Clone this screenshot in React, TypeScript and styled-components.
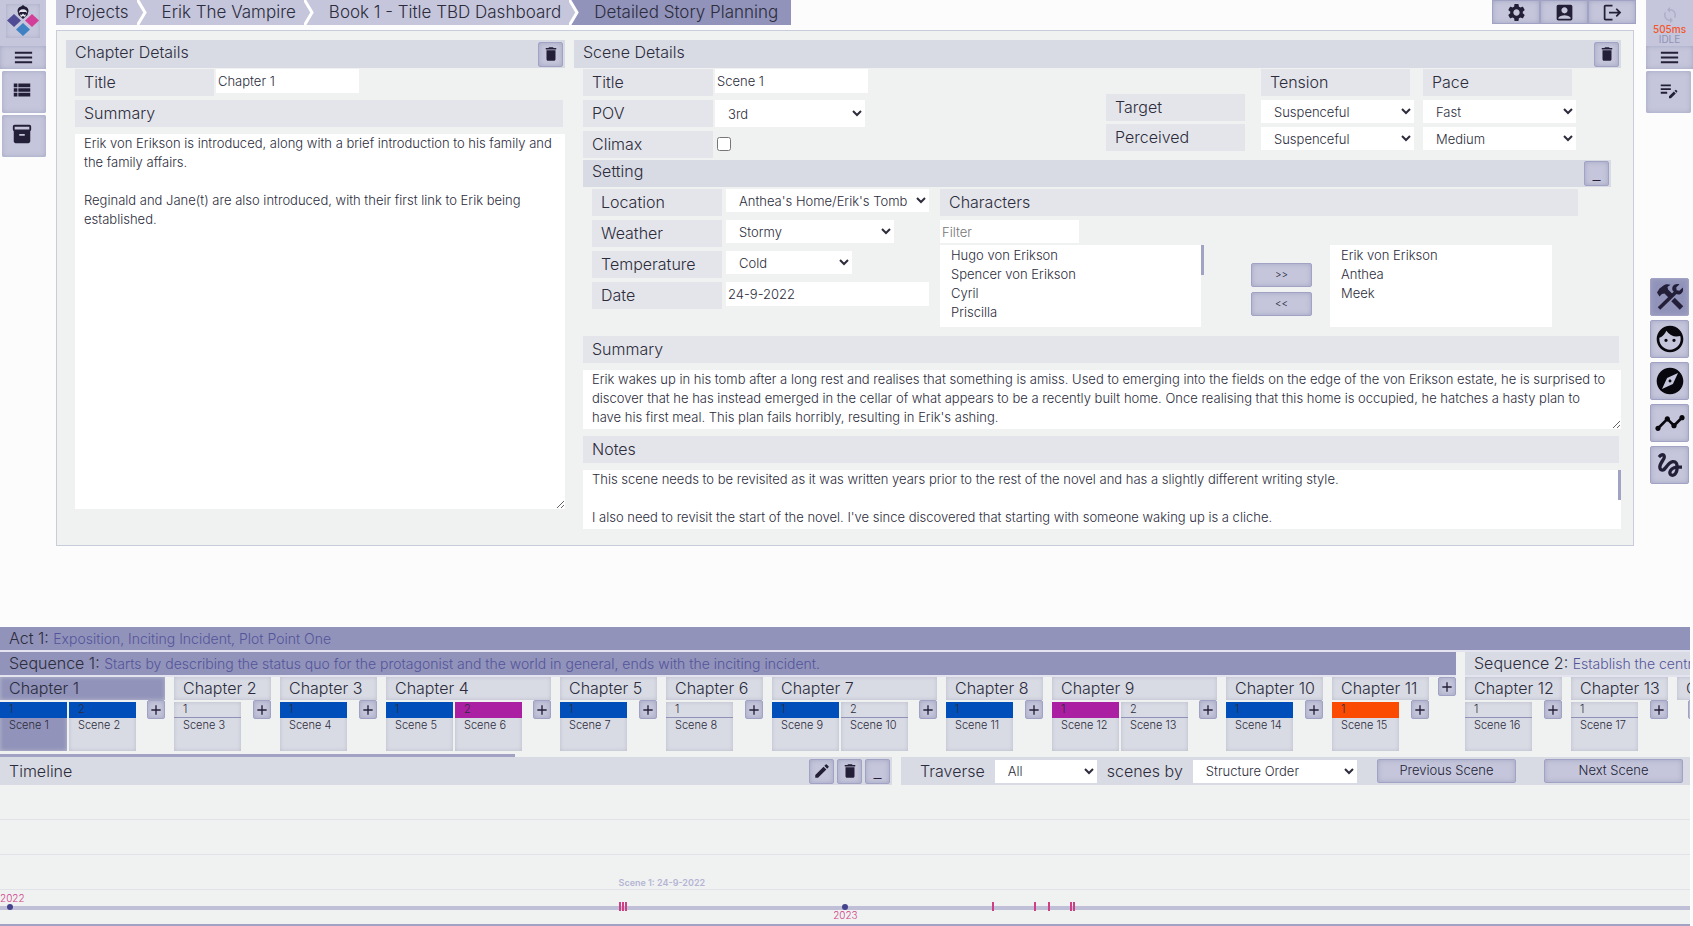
import React from 'react';
import styled, { createGlobalStyle, css } from 'styled-components';
import {
  MdAccountBox,
  MdAdd,
  MdDelete,
  MdEdit,
  MdEditNote,
  MdExplore,
  MdFace,
  MdGesture,
  MdInventory2,
  MdLogout,
  MdMenu,
  MdSettings,
  MdSync,
  MdTimeline,
  MdViewList,
} from 'react-icons/md';

const color = {
  page: '#fcfcfd',
  panel: '#f0f2f2',
  header: '#d9dbe4',
  label: '#e4e5ea',
  control: '#c5c6db',
  active: '#9193ba',
  edge: '#a2a3c4',
  ink: '#231f38',
  text: '#2c2c3c',
  hint: '#54549a',
  pink: '#cf3f86',
  line: '#e2e3e8',
};

const GlobalStyle = createGlobalStyle`
  *, *::before, *::after { box-sizing: border-box; }
  body {
    margin: 0;
    background: ${color.page};
    color: ${color.text};
    font-family: Inter, "Liberation Sans", sans-serif;
    font-size: 16px;
    font-weight: 300;
  }
  button, input, select, textarea {
    margin: 0;
    border: 0;
    border-radius: 0;
    color: inherit;
    font: inherit;
  }
  h2, h3, p, ul, ol { margin: 0; padding: 0; font: inherit; list-style: none; }
`;

const Page = styled.div`
  display: flex;
  flex-direction: column;
  min-height: 100vh;
`;

const Workspace = styled.div`
  display: grid;
  grid-template-columns: 46px minmax(0, 1fr) 47px;
  flex: 1;
`;

/* ---------- side rails ---------- */

const Rail = styled.aside`
  display: flex;
  flex-direction: column;
`;

const RailHead = styled.div`
  display: flex;
  flex-direction: column;
  align-items: center;
  height: 46px;
  background: ${color.control};
`;

const LogoTile = styled.a`
  display: block;
  width: 34px;
  height: 34px;
  margin-top: 4px;
  box-shadow: inset 0 0 4px #a9abc6;
`;

const bevel = css`
  background: ${color.control};
  color: ${color.ink};
  box-shadow: inset 0 0 5px #a3a5c2;
`;

const MenuButton = styled.button`
  ${bevel}
  display: flex;
  align-items: center;
  justify-content: center;
  height: 23px;
  padding: 0;
  font-size: 23px;
`;

const RailButton = styled.button<{ $side: 'left' | 'right' }>`
  ${bevel}
  display: flex;
  align-items: center;
  justify-content: center;
  height: 42px;
  margin-top: 2px;
  margin-left: ${(p) => (p.$side === 'left' ? 2 : 0)}px;
  margin-right: ${(p) => (p.$side === 'left' ? 0 : 2)}px;
  padding: 0 ${(p) => (p.$side === 'left' ? 4 : 0)}px 4px 0;
  border-radius: 2px;
  font-size: 22px;
`;

const SyncState = styled.div`
  display: flex;
  flex-direction: column;
  align-items: center;
  padding-top: 6px;
  color: #aeb0ca;
  font-size: 18px;
`;

const SyncTime = styled.span<{ $late?: boolean }>`
  color: ${(p) => (p.$late ? '#f4552b' : '#9092b6')};
  font-size: 10px;
  font-weight: ${(p) => (p.$late ? 500 : 400)};
  line-height: 10px;
`;

const ToolStack = styled.nav`
  display: flex;
  flex-direction: column;
  gap: 4px;
  margin: 165px 4px 0;
`;

const ToolButton = styled.button<{ $active?: boolean }>`
  ${bevel}
  display: flex;
  align-items: center;
  justify-content: center;
  height: 38px;
  padding: 0;
  border: 1px solid ${color.edge};
  border-radius: 2px;
  background: ${(p) => (p.$active ? color.active : color.control)};
  color: #08070d;
  font-size: 32px;
`;

/* ---------- top bar ---------- */

const Main = styled.main`
  padding: 0 10px;
`;

const TopBar = styled.header`
  display: flex;
  justify-content: space-between;
  height: 25px;
`;

const Crumbs = styled.ol`
  display: flex;
`;

const Crumb = styled.li<{ $current?: boolean }>`
  display: flex;
  padding-right: ${(p) => (p.$current ? 5 : 0)}px;
  background: ${(p) => (p.$current ? color.active : color.control)};
`;

const CrumbLink = styled.a<{ $first?: boolean }>`
  padding: 0 8px 0 ${(p) => (p.$first ? 9 : 15)}px;
  color: inherit;
  font-size: 17px;
  line-height: 25px;
  text-decoration: none;
  white-space: nowrap;
`;

const TopButtons = styled.div`
  display: flex;
`;

const TopButton = styled.button`
  ${bevel}
  display: flex;
  align-items: center;
  justify-content: center;
  width: 48px;
  height: 24px;
  padding: 0;
  border: 1px solid ${color.edge};
  font-size: 21px;
`;

/* ---------- form panel ---------- */

const Panel = styled.div`
  display: grid;
  grid-template-columns: minmax(0, 499fr) minmax(0, 1047fr);
  gap: 9px;
  margin: 5px 2px 0 0;
  padding: 9px 12px 16px 9px;
  border: 1px solid #c9ccda;
  background: ${color.panel};
`;

const Card = styled.section`
  display: flex;
  flex-direction: column;
`;

const CardHead = styled.div<{ $inner?: boolean }>`
  display: flex;
  align-items: center;
  justify-content: space-between;
  height: ${(p) => (p.$inner ? 27 : 28)}px;
  margin: ${(p) => (p.$inner ? '2px 10px 2px 0' : '0 0 1px')};
  padding: 0 2px 0 9px;
  background: ${color.header};
`;

const CardTitle = styled.h2`
  line-height: 22px;
  padding-bottom: 5px;
`;

const CardBody = styled.div`
  display: flex;
  flex: 1;
  flex-direction: column;
  padding-left: 9px;
`;

const IconButton = styled.button`
  ${bevel}
  display: flex;
  align-items: center;
  justify-content: center;
  width: 25px;
  height: 25px;
  padding: 0;
  border: 1px solid ${color.edge};
  border-radius: 2px;
  font-size: 18px;
`;

const Fields = styled.div`
  display: flex;
  flex-direction: column;
  gap: 4px;
`;

const Field = styled.div`
  display: flex;
  gap: 2px;
  height: 27px;
`;

const Label = styled.label<{ $width?: number }>`
  display: block;
  width: ${(p) => (p.$width ? p.$width + 'px' : 'auto')};
  height: 27px;
  padding-left: 9px;
  background: ${color.label};
  line-height: 27px;
`;

const BlockLabel = styled(Label)`
  margin: 0 2px 7px 0;
`;

const TextInput = styled.input<{ $width: number }>`
  width: ${(p) => p.$width}px;
  height: 24px;
  padding: 0 2px;
  background: #fff;
  font-size: 13px;
`;

const Select = styled.select<{ $width: number; $height?: number }>`
  width: ${(p) => p.$width}px;
  height: ${(p) => p.$height ?? 23}px;
  padding: 0 0 0 9px;
  background: #fff;
  font-size: 13px;
`;

const Check = styled.input`
  width: 14px;
  height: 14px;
  margin: 6px 0 0 2px;
`;

const TextArea = styled.textarea<{ $height?: number; $scrolls?: boolean }>`
  display: block;
  width: 100%;
  height: ${(p) => (p.$height ? p.$height + 'px' : 'auto')};
  margin-bottom: ${(p) => (p.$height ? 0 : 20)}px;
  flex: ${(p) => (p.$height ? 'none' : '1')};
  padding: 0 9px;
  background: #fff;
  font-size: 13px;
  line-height: 19px;
  outline: none;
  resize: ${(p) => (p.$scrolls ? 'none' : 'both')};
  scrollbar-width: ${(p) => (p.$scrolls ? 'none' : 'auto')};
`;

const TextBlock = styled.div`
  margin-top: 7px;
`;

const SceneTop = styled.div`
  display: flex;
  justify-content: space-between;
`;

const Matrix = styled.div`
  display: flex;
  margin-right: 45px;
`;

const MatrixNames = styled.div`
  display: flex;
  flex-direction: column;
  gap: 3px;
  margin-right: 16px;
  padding-top: 25px;
`;

const MatrixColumn = styled(Fields)`
  margin-left: 9px;
  &:nth-child(2) { margin-left: 0; }
`;

const Setting = styled.div`
  display: flex;
  gap: 11px;
  padding: 0 43px 2px 9px;
`;

const SettingField = styled(Field)`
  gap: 4px;
  width: 337px;
`;

const Characters = styled.div`
  display: flex;
  flex: 1;
  flex-direction: column;
`;

const CharacterFilter = styled(TextInput)`
  height: 23px;
  margin: 4px 0 2px;
`;

const Transfer = styled.div`
  display: flex;
`;

const CharacterList = styled.select<{ $width: number }>`
  width: ${(p) => p.$width}px;
  height: 82px;
  padding: 2px 0;
  background: #fff;
  font-size: 13px;
  scrollbar-width: none;
  option {
    height: 19px;
    min-height: 19px;
    padding: 0 11px;
    font-weight: 300;
    line-height: 19px;
  }
`;

const ScrollArea = styled.div<{ $outside?: boolean }>`
  position: relative;
  padding-right: ${(p) => (p.$outside ? 3 : 0)}px;
`;

const ScrollThumb = styled.div`
  position: absolute;
  top: 0;
  right: 0;
  width: 3px;
  height: 30px;
  background: ${color.edge};
`;

const MoveButtons = styled.div`
  display: flex;
  flex-direction: column;
  gap: 5px;
  margin: 18px 18px 0 47px;
`;

const PlainButton = styled.button<{ $width: number }>`
  ${bevel}
  width: ${(p) => p.$width}px;
  height: 24px;
  padding: 0 0 2px;
  border: 1px solid ${color.edge};
  border-radius: 2px;
  font-size: ${(p) => (p.$width > 100 ? 13 : 10)}px;
`;

/* ---------- story structure ---------- */

const Dock = styled.footer`
  margin-right: 3px;
  background: ${color.panel};
`;

const Strip = styled.div`
  overflow: hidden;
  height: 127px;
  white-space: nowrap;
`;

const Banner = styled.h3<{ $active?: boolean }>`
  height: 25px;
  padding-left: 9px;
  border-bottom: 2px solid #e3e4f0;
  background: ${(p) => (p.$active ? color.active : color.header)};
  line-height: 23px;
`;

const Hint = styled.span`
  color: ${color.hint};
  font-size: 14px;
`;

const Sequences = styled.div`
  display: flex;
  gap: 9px;
`;

const Sequence = styled.section`
  flex: none;
`;

const SequenceTitle = styled(Banner)`
  overflow: hidden;
  width: 0;
  min-width: 100%;
`;

const Chapters = styled.div`
  display: flex;
  gap: 9px;
`;

const Chapter = styled.div`
  min-width: 97px;
`;

const ChapterName = styled.button<{ $active?: boolean }>`
  display: block;
  width: 100%;
  height: 23px;
  padding: 0 0 0 9px;
  background: ${(p) => (p.$active ? color.active : color.header)};
  box-shadow: inset 0 0 4px #babccb;
  line-height: 23px;
  text-align: left;
`;

const Scenes = styled.div<{ $empty: boolean }>`
  display: flex;
  justify-content: ${(p) => (p.$empty ? 'flex-start' : 'space-between')};
  gap: 11px;
`;

const SceneGroup = styled.div`
  display: flex;
  gap: 2px;
  padding-top: 2px;
`;

const SceneCard = styled.button<{ $active?: boolean }>`
  width: 67px;
  height: 49px;
  padding: 0;
  background: ${(p) => (p.$active ? color.active : color.header)};
  box-shadow: inset 0 0 4px #babccb;
  font-size: 11px;
  text-align: left;
`;

const SceneNumber = styled.span<{ $fill?: string }>`
  display: block;
  height: 16px;
  padding-left: 9px;
  border-bottom: 1px solid ${(p) => p.$fill ?? '#8f91b8'};
  background: ${(p) => p.$fill ?? 'transparent'};
  line-height: 14px;
`;

const SceneName = styled.span`
  display: block;
  height: 33px;
  padding-left: 9px;
  line-height: 14px;
`;

const AddButton = styled.button`
  ${bevel}
  display: flex;
  flex: none;
  align-items: center;
  justify-content: center;
  width: 18px;
  height: 19px;
  padding: 0;
  border: 1px solid ${color.edge};
  border-radius: 2px;
  font-size: 16px;
`;

const ScrollTrack = styled.div`
  display: grid;
  grid-template-columns: 515fr 1175fr;
  height: 3px;
`;

const ScrollHandle = styled.div`
  background: ${color.edge};
`;

/* ---------- timeline ---------- */

const TimelineHead = styled.div`
  display: grid;
  grid-template-columns: minmax(0, 892fr) minmax(0, 789fr);
  gap: 9px;
`;

const TimelineBar = styled.div`
  display: flex;
  align-items: center;
  justify-content: space-between;
  height: 28px;
  padding: 0 2px 0 9px;
  background: ${color.header};
`;

const ButtonGroup = styled.div`
  display: flex;
  gap: 3px;
`;

const TraverseBar = styled(TimelineBar)`
  padding: 0 7px 0 19px;
`;

const TraverseGroup = styled.div<{ $gap: number }>`
  display: flex;
  align-items: center;
  gap: ${(p) => p.$gap}px;
`;

const Lane = styled.div`
  height: 35px;
  border-bottom: 1px solid ${color.line};
`;

const Axis = styled.div`
  position: relative;
  height: 36px;
  padding-top: 16px;
  border-bottom: 2px solid ${color.edge};
`;

const AxisLine = styled.div`
  height: 4px;
  background: #bfc0d7;
`;

const Tick = styled.i`
  position: absolute;
  top: 12px;
  width: 2px;
  height: 9px;
  background: ${color.pink};
`;

const YearDot = styled.i`
  position: absolute;
  top: 14px;
  width: 6px;
  height: 6px;
  border-radius: 50%;
  background: #45438b;
`;

const YearName = styled.span<{ $below?: boolean }>`
  position: absolute;
  top: ${(p) => (p.$below ? 19 : 2)}px;
  color: ${color.pink};
  font-size: 10px;
  line-height: 12px;
`;

const EventName = styled.span`
  position: absolute;
  top: -14px;
  color: #b4b5d2;
  font-size: 9px;
  font-weight: 600;
  line-height: 14px;
`;

/* ---------- drawings ---------- */

const Logo = () => (
  <svg width="34" height="34" viewBox="0 0 34 34" aria-hidden="true">
    <path d="M8 10l7 6.500-7 6.500-7-6.500z" fill="#4f4b95" />
    <path d="M26 10l7 6.500-7 6.500-7-6.500z" fill="#d33f98" />
    <path d="M17 19l7 6.500-7 6.500-7-6.500z" fill="#3f81c3" />
    <path d="M11.500 7C11.500 4.500 13 3 15 2.500L17 1l2 1.500c2 .5 3.500 2 3.500 4.500l-1 4-4.500 4-4.500-4z" fill="#211c33" />
    <path d="M12.800 9c0-2.300 1.600-3.700 4.200-3.700s4.200 1.400 4.200 3.700l-1.400-1h-5.600z" fill="#e2e3ee" />
    <path d="M13.800 10.300l1.700.8L17 9.500l1.500 1.600 1.700-.8-1.200 2.700-2-1-2 1z" fill="#e2e3ee" />
  </svg>
);

const HammerWrench = () => (
  <svg width="30" height="30" viewBox="0 0 30 30" aria-hidden="true">
    <g fill="none" stroke={color.ink} strokeWidth="4">
      <path d="M4 26.500L21.500 9.500" strokeWidth="3.600" />
      <path d="M18 17.500l8.500 8.500" strokeWidth="5" />
    </g>
    <path
      d="M2 10.500l2.500-4L8.500 3.500c2-1.600 4.600-1.600 7-.8l-3 2.300.6 2.600 4.400 4.400-3.800 3.800-4.200-4.200-2.600.4-2.400 2.600z"
      fill={color.ink}
    />
    <path
      d="M24.500 2.200l-3.300 3.400.5 2.700 2.700.5 3.400-3.300c.9 3-.1 5.300-2.100 6.400-1.400.8-3 .8-4.600.2l-3.500-3.500c-.6-1.600-.5-3.200.4-4.500 1.300-2 3.600-2.700 6.500-1.900z"
      fill={color.ink}
    />
  </svg>
);

const CrumbArrow = ({ next }: { next: string }) => (
  <svg width="10" height="25" viewBox="0 0 10 25" aria-hidden="true">
    <path d="M0 0H10V25H0L8 12.500z" fill={next} />
    <path d="M0 -1L8 12.500L0 26" fill="none" stroke="#fff" strokeWidth="3" />
  </svg>
);

/* ---------- data ---------- */

const crumbs = ['Projects', 'Erik The Vampire', 'Book 1 - Title TBD Dashboard', 'Detailed Story Planning'];

const chapterSummary =
  'Erik von Erikson is introduced, along with a brief introduction to his family and the family affairs.\n\nReginald and Jane(t) are also introduced, with their first link to Erik being established.';
const sceneSummary =
  "Erik wakes up in his tomb after a long rest and realises that something is amiss. Used to emerging into the fields on the edge of the von Erikson estate, he is surprised to discover that he has instead emerged in the cellar of what appears to be a recently built home. Once realising that this home is occupied, he hatches a hasty plan to have his first meal. This plan fails horribly, resulting in Erik's ashing.";
const sceneNotes =
  "This scene needs to be revisited as it was written years prior to the rest of the novel and has a slightly different writing style.\n\nI also need to revisit the start of the novel. I've since discovered that starting with someone waking up is a cliche.\n\n\n";

const BLUE = '#004eb9';
const MAGENTA = '#ab20a2';
const ORANGE = '#fb4b02';

type ChapterData = { no: number; first: number; fills: (string | undefined)[] };

const firstSequence: ChapterData[] = [
  { no: 1, first: 1, fills: [BLUE, BLUE] },
  { no: 2, first: 3, fills: [undefined] },
  { no: 3, first: 4, fills: [BLUE] },
  { no: 4, first: 5, fills: [BLUE, MAGENTA] },
  { no: 5, first: 7, fills: [BLUE] },
  { no: 6, first: 8, fills: [undefined] },
  { no: 7, first: 9, fills: [BLUE, undefined] },
  { no: 8, first: 11, fills: [BLUE] },
  { no: 9, first: 12, fills: [MAGENTA, undefined] },
  { no: 10, first: 14, fills: [BLUE] },
  { no: 11, first: 15, fills: [ORANGE] },
];

const secondSequence: ChapterData[] = [
  { no: 12, first: 16, fills: [undefined] },
  { no: 13, first: 17, fills: [undefined] },
  { no: 14, first: 18, fills: [] },
];

const sceneTicks = [36.6, 36.8, 37, 58.7, 61.2, 62, 63.3, 63.5];
const years = [
  { name: '2022', dot: 0.4, text: 0, below: false },
  { name: '2023', dot: 49.8, text: 49.3, below: true },
];

const ChapterBlock = ({ data }: { data: ChapterData }) => (
  <Chapter>
    <ChapterName $active={data.no === 1}>Chapter {data.no}</ChapterName>
    <Scenes $empty={data.fills.length === 0}>
      <SceneGroup>
        {data.fills.map((fill, i) => (
          <SceneCard key={i} $active={data.first + i === 1}>
            <SceneNumber $fill={fill}>{i + 1}</SceneNumber>
            <SceneName>Scene {data.first + i}</SceneName>
          </SceneCard>
        ))}
      </SceneGroup>
      <AddButton aria-label={`Add scene to chapter ${data.no}`}>
        <MdAdd />
      </AddButton>
    </Scenes>
  </Chapter>
);

export default function App() {
  return (
    <Page>
      <GlobalStyle />
      <Workspace>
        <Rail>
          <RailHead>
            <LogoTile href="#" aria-label="Home"><Logo /></LogoTile>
          </RailHead>
          <MenuButton aria-label="Menu"><MdMenu /></MenuButton>
          <RailButton $side="left" aria-label="Outline"><MdViewList /></RailButton>
          <RailButton $side="left" aria-label="Archive"><MdInventory2 /></RailButton>
        </Rail>

        <Main>
          <TopBar>
            <nav aria-label="Breadcrumb">
              <Crumbs>
                {crumbs.map((name, i) => (
                  <Crumb key={name} $current={i === crumbs.length - 1}>
                    <CrumbLink href="#" $first={i === 0}>{name}</CrumbLink>
                    {i < crumbs.length - 1 && (
                      <CrumbArrow next={i === crumbs.length - 2 ? color.active : color.control} />
                    )}
                  </Crumb>
                ))}
              </Crumbs>
            </nav>
            <TopButtons>
              <TopButton aria-label="Settings"><MdSettings /></TopButton>
              <TopButton aria-label="Account"><MdAccountBox /></TopButton>
              <TopButton aria-label="Log out"><MdLogout /></TopButton>
            </TopButtons>
          </TopBar>

          <Panel>
            <Card>
              <CardHead>
                <CardTitle>Chapter Details</CardTitle>
                <IconButton aria-label="Delete chapter"><MdDelete /></IconButton>
              </CardHead>
              <CardBody>
                <Fields>
                  <Field>
                    <Label $width={139} htmlFor="chapter-title">Title</Label>
                    <TextInput $width={143} id="chapter-title" defaultValue="Chapter 1" />
                  </Field>
                  <BlockLabel htmlFor="chapter-summary">Summary</BlockLabel>
                </Fields>
                <TextArea id="chapter-summary" defaultValue={chapterSummary} />
              </CardBody>
            </Card>

            <Card>
              <CardHead>
                <CardTitle>Scene Details</CardTitle>
                <IconButton aria-label="Delete scene"><MdDelete /></IconButton>
              </CardHead>
              <CardBody>
                <SceneTop>
                  <Fields>
                    <Field>
                      <Label $width={130} htmlFor="scene-title">Title</Label>
                      <TextInput $width={153} id="scene-title" defaultValue="Scene 1" />
                    </Field>
                    <Field>
                      <Label $width={130} htmlFor="pov">POV</Label>
                      <Select $width={150} $height={27} id="pov"><option>3rd</option></Select>
                    </Field>
                    <Field>
                      <Label $width={130} htmlFor="climax">Climax</Label>
                      <Check type="checkbox" id="climax" />
                    </Field>
                  </Fields>
                  <Matrix>
                    <MatrixNames>
                      <Label as="span" $width={139}>Target</Label>
                      <Label as="span" $width={139}>Perceived</Label>
                    </MatrixNames>
                    <MatrixColumn>
                      <Label as="span" $width={149}>Tension</Label>
                      <Select $width={153} aria-label="Target tension"><option>Suspenceful</option></Select>
                      <Select $width={153} aria-label="Perceived tension"><option>Suspenceful</option></Select>
                    </MatrixColumn>
                    <MatrixColumn>
                      <Label as="span" $width={149}>Pace</Label>
                      <Select $width={153} aria-label="Target pace"><option>Fast</option></Select>
                      <Select $width={153} aria-label="Perceived pace"><option>Medium</option></Select>
                    </MatrixColumn>
                  </Matrix>
                </SceneTop>

                <CardHead $inner>
                  <CardTitle>Setting</CardTitle>
                  <IconButton aria-label="Collapse setting">_</IconButton>
                </CardHead>
                <Setting>
                  <Fields>
                    <SettingField>
                      <Label $width={130} htmlFor="location">Location</Label>
                      <Select $width={203} id="location"><option>Anthea's Home/Erik's Tomb</option></Select>
                    </SettingField>
                    <SettingField>
                      <Label $width={130} htmlFor="weather">Weather</Label>
                      <Select $width={168} id="weather"><option>Stormy</option></Select>
                    </SettingField>
                    <SettingField>
                      <Label $width={130} htmlFor="temperature">Temperature</Label>
                      <Select $width={126} id="temperature"><option>Cold</option></Select>
                    </SettingField>
                    <SettingField>
                      <Label $width={130} htmlFor="date">Date</Label>
                      <TextInput $width={203} id="date" defaultValue="24-9-2022" />
                    </SettingField>
                  </Fields>
                  <Characters>
                    <Label htmlFor="all-characters">Characters</Label>
                    <CharacterFilter $width={139} placeholder="Filter" aria-label="Filter characters" />
                    <Transfer>
                      <ScrollArea $outside>
                        <CharacterList $width={261} multiple id="all-characters">
                          <option>Hugo von Erikson</option>
                          <option>Spencer von Erikson</option>
                          <option>Cyril</option>
                          <option>Priscilla</option>
                        </CharacterList>
                        <ScrollThumb />
                      </ScrollArea>
                      <MoveButtons>
                        <PlainButton $width={61} aria-label="Add to scene">&gt;&gt;</PlainButton>
                        <PlainButton $width={61} aria-label="Remove from scene">&lt;&lt;</PlainButton>
                      </MoveButtons>
                      <CharacterList $width={222} multiple aria-label="Characters in scene">
                        <option>Erik von Erikson</option>
                        <option>Anthea</option>
                        <option>Meek</option>
                      </CharacterList>
                    </Transfer>
                  </Characters>
                </Setting>

                <TextBlock>
                  <BlockLabel htmlFor="scene-summary">Summary</BlockLabel>
                  <TextArea $height={59} id="scene-summary" defaultValue={sceneSummary} />
                </TextBlock>
                <TextBlock>
                  <BlockLabel htmlFor="scene-notes">Notes</BlockLabel>
                  <ScrollArea>
                    <TextArea $height={59} $scrolls id="scene-notes" defaultValue={sceneNotes} />
                    <ScrollThumb />
                  </ScrollArea>
                </TextBlock>
              </CardBody>
            </Card>
          </Panel>
        </Main>

        <Rail>
          <RailHead>
            <SyncState>
              <MdSync />
              <SyncTime $late>505ms</SyncTime>
              <SyncTime>IDLE</SyncTime>
            </SyncState>
          </RailHead>
          <MenuButton aria-label="Tools menu"><MdMenu /></MenuButton>
          <RailButton $side="right" aria-label="Notes"><MdEditNote /></RailButton>
          <ToolStack>
            <ToolButton $active aria-label="Build"><HammerWrench /></ToolButton>
            <ToolButton aria-label="Characters"><MdFace /></ToolButton>
            <ToolButton aria-label="Locations"><MdExplore /></ToolButton>
            <ToolButton aria-label="Plot"><MdTimeline /></ToolButton>
            <ToolButton aria-label="Threads"><MdGesture color={color.ink} /></ToolButton>
          </ToolStack>
        </Rail>
      </Workspace>

      <Dock>
        <Strip>
          <Banner $active>Act 1: <Hint>Exposition, Inciting Incident, Plot Point One</Hint></Banner>
          <Sequences>
            <Sequence>
              <SequenceTitle $active>
                Sequence 1: <Hint>Starts by describing the status quo for the protagonist and the world in general, ends with the inciting incident.</Hint>
              </SequenceTitle>
              <Chapters>
                {firstSequence.map((c) => <ChapterBlock key={c.no} data={c} />)}
                <AddButton aria-label="Add chapter"><MdAdd /></AddButton>
              </Chapters>
            </Sequence>
            <Sequence>
              <SequenceTitle>
                Sequence 2: <Hint>Establish the central</Hint>
              </SequenceTitle>
              <Chapters>
                {secondSequence.map((c) => <ChapterBlock key={c.no} data={c} />)}
              </Chapters>
            </Sequence>
          </Sequences>
        </Strip>
        <ScrollTrack><ScrollHandle /></ScrollTrack>

        <TimelineHead>
          <TimelineBar>
            <h2>Timeline</h2>
            <ButtonGroup>
              <IconButton aria-label="Edit timeline"><MdEdit /></IconButton>
              <IconButton aria-label="Delete timeline"><MdDelete /></IconButton>
              <IconButton aria-label="Collapse timeline">_</IconButton>
            </ButtonGroup>
          </TimelineBar>
          <TraverseBar>
            <TraverseGroup $gap={10}>
              <label htmlFor="traverse">Traverse</label>
              <Select $width={102} id="traverse"><option>All</option></Select>
              <label htmlFor="order">scenes by</label>
              <Select $width={164} id="order"><option>Structure Order</option></Select>
            </TraverseGroup>
            <TraverseGroup $gap={28}>
              <PlainButton $width={139}>Previous Scene</PlainButton>
              <PlainButton $width={139}>Next Scene</PlainButton>
            </TraverseGroup>
          </TraverseBar>
        </TimelineHead>
        <Lane />
        <Lane />
        <Lane />
        <Axis>
          <AxisLine />
          {years.map((y) => (
            <React.Fragment key={y.name}>
              <YearDot style={{ left: `${y.dot}%` }} />
              <YearName $below={y.below} style={{ left: `${y.text}%` }}>{y.name}</YearName>
            </React.Fragment>
          ))}
          {sceneTicks.map((at) => <Tick key={at} style={{ left: `${at}%` }} />)}
          <EventName style={{ left: `${sceneTicks[0]}%` }}>Scene 1: 24-9-2022</EventName>
        </Axis>
      </Dock>
    </Page>
  );
}
